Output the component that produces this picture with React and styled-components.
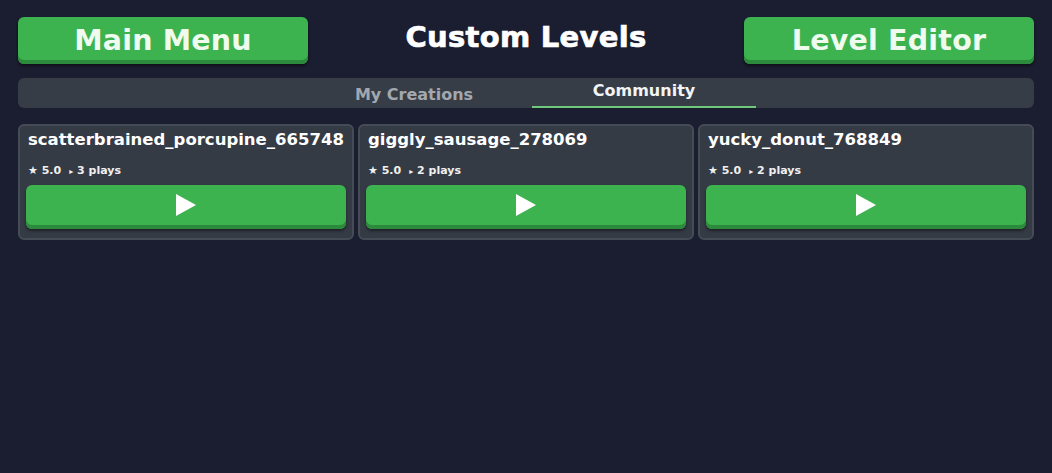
import React, { useState } from 'react';
import styled, { createGlobalStyle } from 'styled-components';

const GlobalStyle = createGlobalStyle`
    html, body {
        margin: 0;
        background: #1b1d30;
        font-family: "DejaVu Sans", "Noto Sans", sans-serif;
        color: #fff;
    }
`

const levels = [
    { name: 'scatterbrained_porcupine_665748', rating: '5.0', plays: 3 },
    { name: 'giggly_sausage_278069', rating: '5.0', plays: 2 },
    { name: 'yucky_donut_768849', rating: '5.0', plays: 2 },
]

function PlayIcon() {
    return (
        <svg width="22" height="24" viewBox="0 0 22 24">
            <path d="M1 1 L21 12 L1 23 Z" fill="#fff" />
        </svg>
    )
}

function LevelCard({ name, rating, plays }) {
    return (
        <Card>
            <CardTitle>{name}</CardTitle>
            <Meta>
                <span>★ {rating}</span>
                <span><small>▸</small> {plays} plays</span>
            </Meta>
            <PlayButton>
                <PlayIcon />
            </PlayButton>
        </Card>
    )
}

export default function App() {
    const [tab, setTab] = useState('community')

    return (
        <Page>
            <GlobalStyle />
            <Header>
                <BigButton>Main Menu</BigButton>
                <Title>Custom Levels</Title>
                <BigButton>Level Editor</BigButton>
            </Header>

            <Tabs>
                <Tab width={236} active={tab === 'mine'} onClick={() => setTab('mine')}>My Creations</Tab>
                <Tab width={224} active={tab === 'community'} onClick={() => setTab('community')}>Community</Tab>
            </Tabs>

            <Grid>
                {levels.map(l => <LevelCard key={l.name} {...l} />)}
            </Grid>
        </Page>
    )
}

const Page = styled.div`
    width: 1052px;
    height: 473px;
    box-sizing: border-box;
    padding: 17px 18px 0 18px;
    overflow: hidden;
`

const Header = styled.div`
    display: flex;
    justify-content: space-between;
    align-items: flex-start;
    height: 47px;
`

const BigButton = styled.button`
    width: 290px;
    height: 47px;
    box-sizing: border-box;
    padding: 1px 0 2px 0;
    border: none;
    border-radius: 6px;
    background: #3cb34f;
    box-shadow: inset 0 -4px 0 #2b8a3c, 0 2px 3px rgba(0, 0, 0, 0.5);
    color: #eefbee;
    font-family: inherit;
    font-size: 28.5px;
    font-weight: 700;
    letter-spacing: 0.2px;
    cursor: pointer;
`

const Title = styled.h1`
    margin: 0;
    padding-top: 3px;
    font-size: 29px;
    font-weight: 900;
    line-height: 34px;
    letter-spacing: 0.3px;
    color: #fff;
    -webkit-text-stroke: 0.7px #fff;
`

const Tabs = styled.div`
    margin-top: 14px;
    height: 30px;
    border-radius: 6px;
    background: #363d47;
    display: flex;
    justify-content: center;
`

const Tab = styled.div`
    width: ${p => p.width}px;
    box-sizing: border-box;
    display: flex;
    justify-content: center;
    align-items: ${p => p.active ? 'flex-start' : 'center'};
    padding-top: ${p => p.active ? '3px' : '4px'};
    font-size: 16px;
    font-weight: 700;
    color: ${p => p.active ? '#f2f4f6' : '#a3a8ae'};
    border-bottom: 2px solid ${p => p.active ? '#6fc77c' : 'transparent'};
    cursor: pointer;
`

const Grid = styled.div`
    margin-top: 16px;
    display: grid;
    grid-template-columns: repeat(3, 1fr);
    gap: 4px;
`

const Card = styled.div`
    box-sizing: border-box;
    height: 116px;
    padding: 4px 6px 0 6px;
    border: 2px solid #454c56;
    border-radius: 6px;
    background: #353b45;
`

const CardTitle = styled.div`
    font-size: 16.5px;
    font-weight: 700;
    line-height: 20px;
    padding-left: 2px;
    white-space: nowrap;
    color: #fff;
`

const Meta = styled.div`
    display: flex;
    gap: 8px;
    margin-top: 13px;
    padding-left: 2px;
    font-size: 11px;
    font-weight: 700;
    line-height: 16px;
    color: #f0f0f0;

    small {
        font-size: 8px;
    }
`

const PlayButton = styled.button`
    display: flex;
    width: 100%;
    height: 44px;
    margin-top: 5px;
    padding: 0 0 4px 0;
    justify-content: center;
    align-items: center;
    border: none;
    border-radius: 6px;
    background: #3cb34f;
    box-shadow: inset 0 -4px 0 #2b8a3c, 0 2px 3px rgba(0, 0, 0, 0.45);
    cursor: pointer;
`
